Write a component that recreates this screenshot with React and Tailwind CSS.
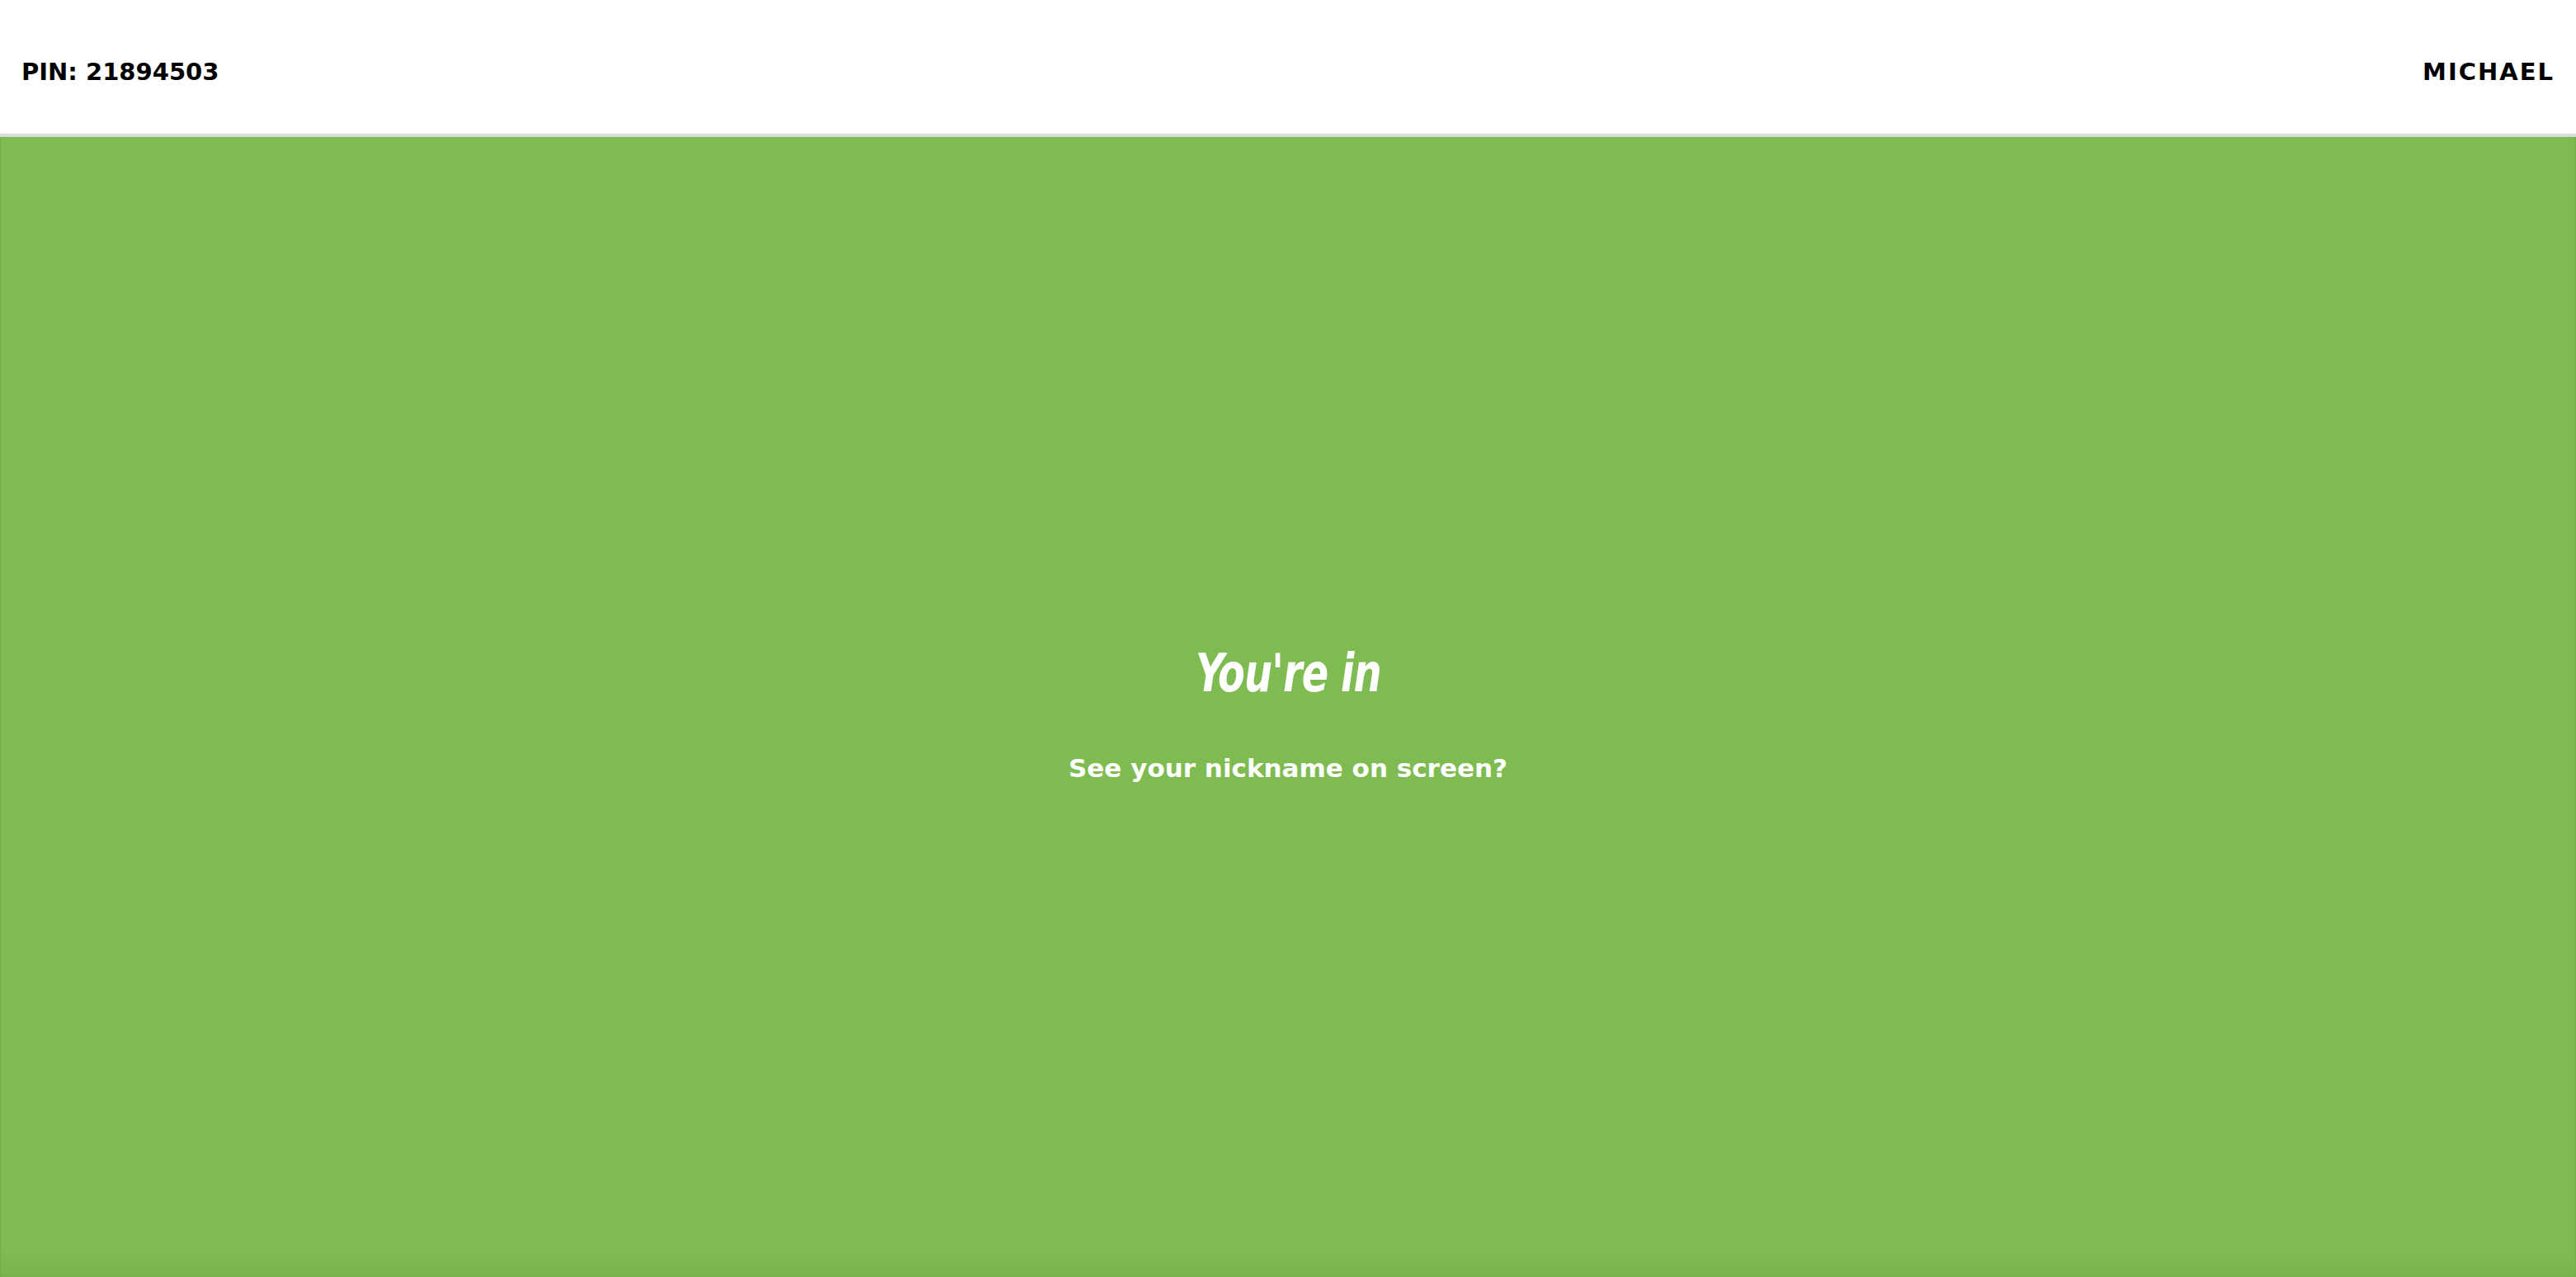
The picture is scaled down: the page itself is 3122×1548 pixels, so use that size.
export default function App() {
  const sans = { fontFamily: '"DejaVu Sans", "Liberation Sans", sans-serif' };
  return (
    <div className="flex h-[1548px] w-full flex-col bg-white" style={sans}>
      <header className="flex h-[162px] shrink-0 items-center justify-between px-[26px] pt-[14px] text-[29px] font-bold text-black">
        <div>PIN: 21894503</div>
        <div className="tracking-[2px]">MICHAEL</div>
      </header>
      <div className="h-[4px] shrink-0 bg-[#dcdcdc]" />
      <main className="flex flex-1 flex-col items-center justify-center border-x border-[#74ad4a] bg-[#7ebb51] pt-[16px] text-white shadow-[inset_0_-24px_24px_-16px_rgba(0,0,0,0.06)]">
        <h1
          className="scale-x-[0.83] text-[64px] font-bold italic leading-none tracking-[-1px]"
          style={{ fontFamily: '"DejaVu Sans Condensed", "DejaVu Sans", sans-serif' }}
        >
          You're in
        </h1>
        <p className="mt-[68px] text-[31px] font-bold leading-none">See your nickname on screen?</p>
      </main>
    </div>
  );
}
